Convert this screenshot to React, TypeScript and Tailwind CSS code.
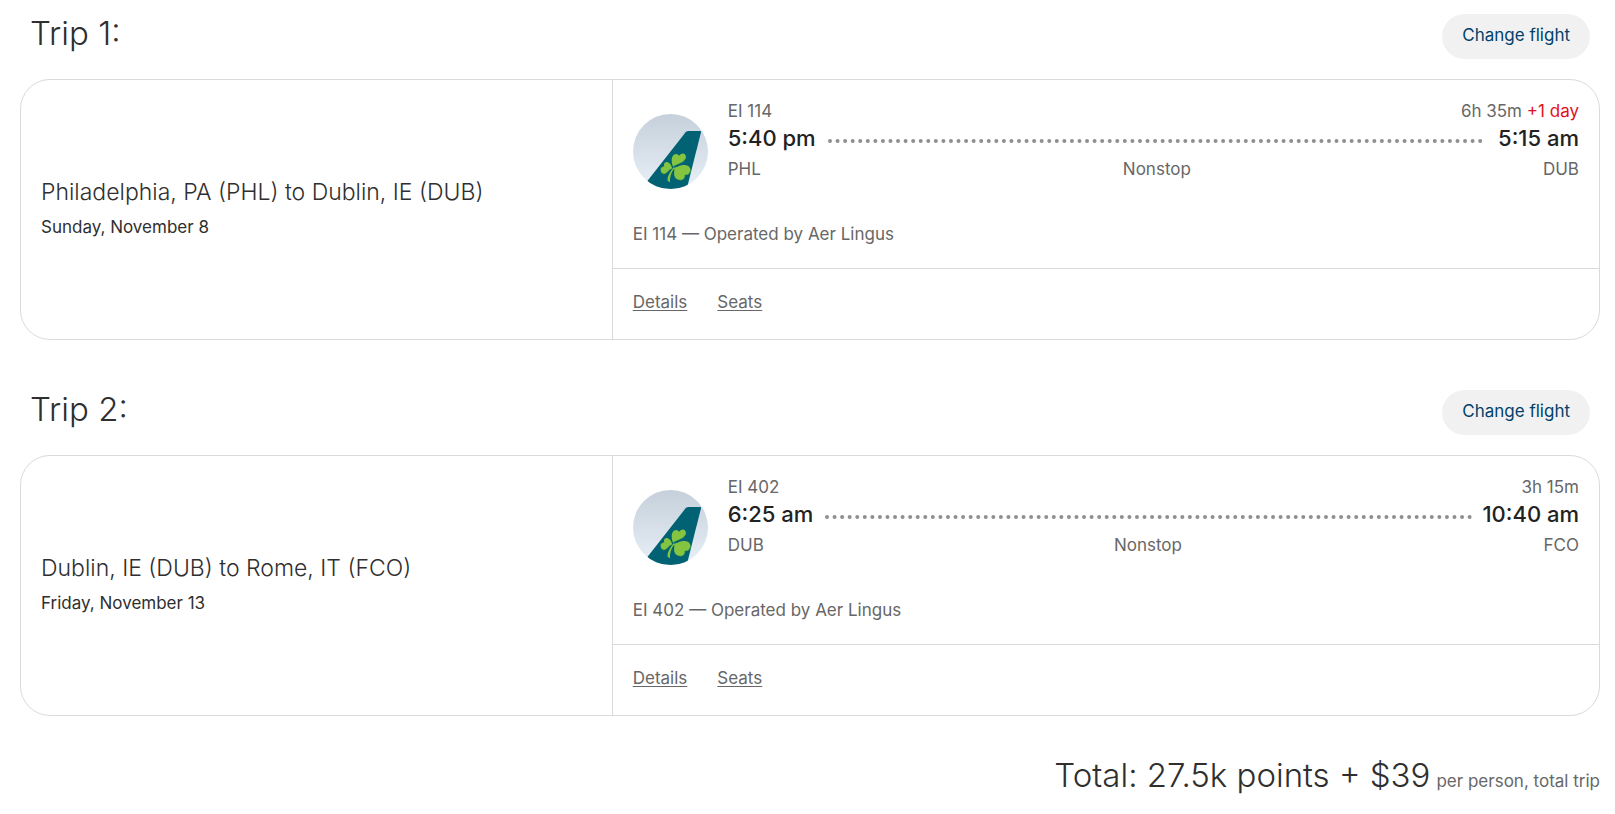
import { useId } from "react";

type Trip = {
  title: string;
  route: string;
  date: string;
  flight: string;
  duration: string;
  dayOffset?: string;
  departTime: string;
  departCode: string;
  arriveTime: string;
  arriveCode: string;
  stops: string;
  operator: string;
};

const trips: Trip[] = [
  {
    title: "Trip 1:",
    route: "Philadelphia, PA (PHL) to Dublin, IE (DUB)",
    date: "Sunday, November 8",
    flight: "EI 114",
    duration: "6h 35m",
    dayOffset: "+1 day",
    departTime: "5:40 pm",
    departCode: "PHL",
    arriveTime: "5:15 am",
    arriveCode: "DUB",
    stops: "Nonstop",
    operator: "Aer Lingus",
  },
  {
    title: "Trip 2:",
    route: "Dublin, IE (DUB) to Rome, IT (FCO)",
    date: "Friday, November 13",
    flight: "EI 402",
    duration: "3h 15m",
    departTime: "6:25 am",
    departCode: "DUB",
    arriveTime: "10:40 am",
    arriveCode: "FCO",
    stops: "Nonstop",
    operator: "Aer Lingus",
  },
];

const leaves = [
  "M40 52.4C38.3 48.5 37.9 42.8 41.2 40.6C43.3 39.3 45.3 40.4 46 42C47.2 39.7 50.3 38.6 51.9 40.4C54.2 43.2 51.5 46.9 47.3 48.7C44.3 50 41.6 50.8 40 52.4Z",
  "M39 54.2C38.2 50.9 36.1 47.7 33.4 48C31.2 48.3 30.5 50.5 31.3 52.4C29 52.3 27.2 54.2 27.7 56.6C28.1 59.3 30.5 60.4 32.6 59C35 57.3 36.2 54.8 39 54.2Z",
  "M41 53.8C42.2 57.2 39.7 61.3 43.2 64.5C46.9 67.2 52.3 65.7 51.5 60.7C54.8 61 57.7 58.5 57.3 55.3C56.7 51.5 52.3 50.6 48.7 51.3C45.6 51.9 43.4 53.6 41 53.8Z",
];

function TailLogo() {
  const id = useId();
  return (
    <svg viewBox="0 0 75 75" className="size-[75px] shrink-0" role="img" aria-label="Aer Lingus">
      <defs>
        <linearGradient id={`${id}-sky`} x1="0" y1="0" x2="0" y2="1">
          <stop offset="0" stopColor="#c5d0da" />
          <stop offset="1" stopColor="#e8f0f8" />
        </linearGradient>
        <clipPath id={`${id}-disc`}>
          <circle cx="37.5" cy="37.5" r="37.5" />
        </clipPath>
      </defs>
      <g clipPath={`url(#${id}-disc)`}>
        <rect width="75" height="75" fill={`url(#${id}-sky)`} />
        <path d="M14 67.6 52.6 18.3Q53.8 17 55.6 17H67.2Q68.3 17 68 18.2L54.6 71.4 52 76H14Z" fill="#006272" />
        <g fill="#3f9b45" transform="translate(.4 .6)">
          {leaves.map((d) => (
            <path key={d} d={d} />
          ))}
        </g>
        <g fill="#84c441">
          {leaves.map((d) => (
            <path key={d} d={d} />
          ))}
          <path d="M40.8 53.2C37.3 57.4 34 62.3 34.6 66.7L37 68.2C36.6 63.3 38.3 57.9 41.5 54.2Z" />
        </g>
      </g>
    </svg>
  );
}

function DottedLine() {
  return (
    <svg className="mt-1.5 h-1 w-full self-center overflow-visible" aria-hidden="true">
      <line x1="2" y1="2" x2="100%" y2="2" stroke="#8f8f8f" strokeWidth="4" strokeLinecap="round" strokeDasharray="0 7.56" />
    </svg>
  );
}

function TripSection({ trip }: { trip: Trip }) {
  return (
    <section>
      <header className="flex items-start justify-between px-[10px] pb-5">
        <h2 className="text-[33px] leading-[38px] font-light">{trip.title}</h2>
        <button type="button" className="h-[45px] cursor-pointer rounded-full bg-[#f1f1f1] px-5 pb-1 text-[17px] leading-6 text-[#01426a]">
          Change flight
        </button>
      </header>
      <div className="flex rounded-[30px] border border-[#dadada]">
        <div className="flex w-3/8 flex-col justify-center border-r border-[#dadada] px-5 pb-0.5">
          <h3 className="text-[23px] leading-9 font-light">{trip.route}</h3>
          <p className="text-[17px] leading-[34px]">{trip.date}</p>
        </div>
        <div className="flex-1 text-[17px] leading-6 text-[#676767]">
          <div className="px-5 pt-[19px] pb-[22px]">
            <div className="flex items-start gap-5">
              <div className="pt-[15px]">
                <TailLogo />
              </div>
              <div className="flex-1">
                <div className="flex justify-between">
                  <span>{trip.flight}</span>
                  <span>
                    {trip.duration}
                    {trip.dayOffset && <span className="text-[#e31021]"> {trip.dayOffset}</span>}
                  </span>
                </div>
                <div className="grid grid-cols-[auto_1fr_auto] gap-x-3 gap-y-1">
                  <span className="text-[22px] leading-[30px] font-medium text-[#222222]">{trip.departTime}</span>
                  <DottedLine />
                  <span className="text-[22px] leading-[30px] font-medium text-[#222222]">{trip.arriveTime}</span>
                  <span>{trip.departCode}</span>
                  <span className="text-center">{trip.stops}</span>
                  <span className="text-right">{trip.arriveCode}</span>
                </div>
              </div>
            </div>
            <p className="mt-[33px]">
              {trip.flight} — Operated by {trip.operator}
            </p>
          </div>
          <div className="flex gap-[30px] border-t border-[#dadada] px-5 pt-[21px] pb-[25px]">
            <a href="#details" className="underline underline-offset-2">
              Details
            </a>
            <a href="#seats" className="underline underline-offset-2">
              Seats
            </a>
          </div>
        </div>
      </div>
    </section>
  );
}

export default function App() {
  return (
    <main className="bg-white pt-[14px] pr-[15px] pl-5 font-['Inter',sans-serif] text-[#2f2f2f]">
      <div className="flex flex-col gap-[50px]">
        {trips.map((trip) => (
          <TripSection key={trip.title} trip={trip} />
        ))}
      </div>
      <p className="mt-[35px] flex flex-wrap items-baseline justify-end gap-x-[6px] text-[33px] leading-[48px] font-light">
        <span>Total: 27.5k points + $39</span>
        <span className="text-[17px] font-normal text-[#676767]">per person, total trip</span>
      </p>
    </main>
  );
}
